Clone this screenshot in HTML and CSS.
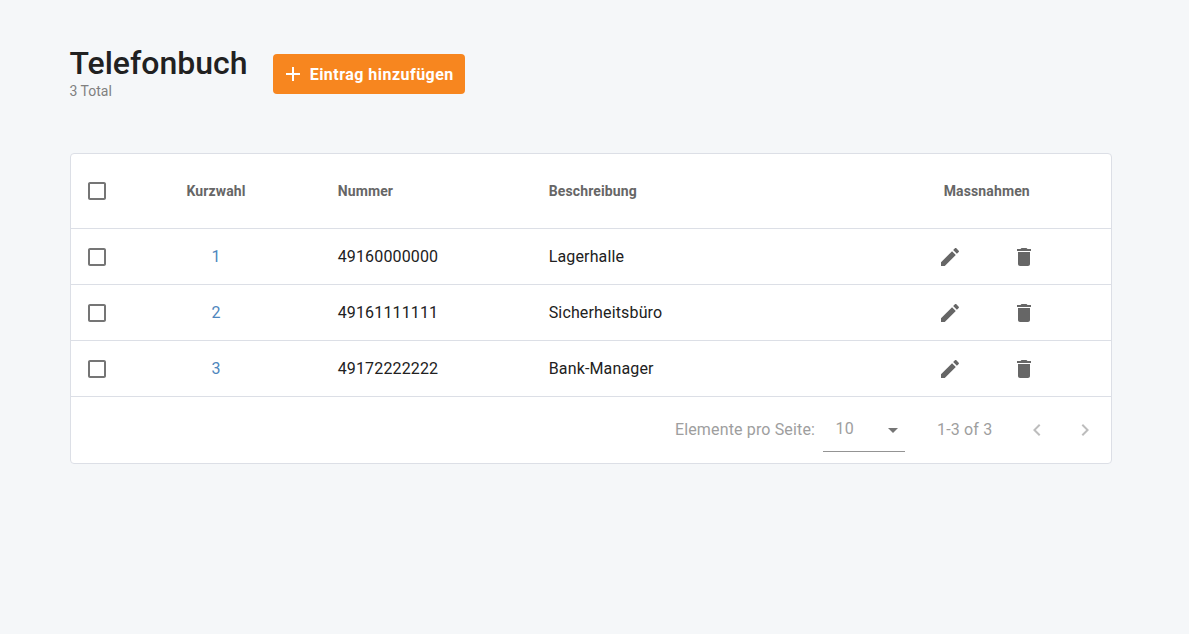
FILE: index.html
```html
<!DOCTYPE html>
<html lang="de">
<head>
<meta charset="utf-8">
<title>Telefonbuch</title>
<link rel="stylesheet" href="styles.css">
</head>
<body>
<svg width="0" height="0" class="defs">
  <symbol id="box" viewBox="0 0 24 24"><path d="M19 5v14H5V5h14m0-2H5c-1.1 0-2 .9-2 2v14c0 1.1.9 2 2 2h14c1.1 0 2-.9 2-2V5c0-1.1-.9-2-2-2z"/></symbol>
  <symbol id="edit" viewBox="0 0 24 24"><path d="M3 17.25V21h3.75L17.81 9.94l-3.75-3.75L3 17.25zM20.71 7.04c.39-.39.39-1.02 0-1.41l-2.34-2.34c-.39-.39-1.02-.39-1.41 0l-1.83 1.83 3.75 3.75 1.83-1.83z"/></symbol>
  <symbol id="delete" viewBox="0 0 24 24"><path d="M6 19c0 1.1.9 2 2 2h8c1.1 0 2-.9 2-2V7H6v12zM19 4h-3.5l-1-1h-5l-1 1H5v2h14V4z"/></symbol>
</svg>
<main class="page">
  <header class="header">
    <div class="heading">
      <h1 class="title">Telefonbuch</h1>
      <div class="total">3 Total</div>
    </div>
    <button class="add"><svg class="icon-add" viewBox="0 0 24 24"><path d="M19 13h-6v6h-2v-6H5v-2h6V5h2v6h6v2z"/></svg><span>Eintrag hinzufügen</span></button>
  </header>
  <section class="card">
    <div class="row head">
      <div class="check"><svg class="icon box"><use href="#box"/></svg></div>
      <div class="dial">Kurzwahl</div><div>Nummer</div><div>Beschreibung</div><div class="actions-title">Massnahmen</div>
    </div>
    <div class="row">
      <div class="check"><svg class="icon box"><use href="#box"/></svg></div>
      <div class="dial">1</div><div>49160000000</div><div>Lagerhalle</div>
      <div class="actions"><svg class="icon"><use href="#edit"/></svg><svg class="icon"><use href="#delete"/></svg></div>
    </div>
    <div class="row">
      <div class="check"><svg class="icon box"><use href="#box"/></svg></div>
      <div class="dial">2</div><div>49161111111</div><div>Sicherheitsbüro</div>
      <div class="actions"><svg class="icon"><use href="#edit"/></svg><svg class="icon"><use href="#delete"/></svg></div>
    </div>
    <div class="row">
      <div class="check"><svg class="icon box"><use href="#box"/></svg></div>
      <div class="dial">3</div><div>49172222222</div><div>Bank-Manager</div>
      <div class="actions"><svg class="icon"><use href="#edit"/></svg><svg class="icon"><use href="#delete"/></svg></div>
    </div>
    <footer class="pager">
      <span class="label">Elemente pro Seite:</span>
      <div class="select"><span>10</span><svg class="icon arrow" viewBox="0 0 24 24"><path d="M7 10l5 5 5-5z"/></svg></div>
      <span class="range">1-3 of 3</span>
      <svg class="icon nav" viewBox="0 0 24 24"><path d="M15.41 7.41L14 6l-6 6 6 6 1.41-1.41L10.83 12z"/></svg>
      <svg class="icon nav" viewBox="0 0 24 24"><path d="M10 6L8.59 7.41 13.17 12l-4.58 4.59L10 18l6-6z"/></svg>
    </footer>
  </section>
</main>
</body>
</html>
```
FILE: styles.css
```css
* { box-sizing: border-box; }
body { margin: 0; background: #f5f7f9; color: #212121; font-family: Roboto, sans-serif; font-size: 16px; letter-spacing: .15px; }
.defs { display: block; }
.page { padding: 43px 77px 0 69.5px; }
.header { display: flex; align-items: flex-start; height: 110px; }
.heading { width: 203.5px; }
.title { margin: 0; font-size: 32px; line-height: 40px; font-weight: 500; letter-spacing: 0; }
.total { font-size: 14px; line-height: 16px; color: #808080; letter-spacing: 0; }
.add { display: flex; align-items: center; gap: 4.7px; width: 192px; height: 40px; margin-top: 11px; padding: 0 8px; border: 0; border-radius: 4px; background: #f7861f; color: #fff; font: 700 16px Roboto, sans-serif; letter-spacing: .47px; white-space: nowrap; }
.icon-add { width: 24px; height: 24px; fill: currentColor; flex: none; }
.icon { display: block; width: 24px; height: 24px; fill: #666; flex: none; }
.box { fill: #757575; }
.card { margin-left: .5px; border: 1px solid #dcdfe6; border-radius: 4px; background: #fff; overflow: hidden; }
.row { display: grid; grid-template-columns: 90px 176.7px 211px 389.3px 1fr; align-items: center; height: 56px; border-bottom: 1px solid #dcdfe6; }
.head { height: 75px; font-size: 14px; font-weight: 700; color: #666; letter-spacing: .13px; }
.check { padding-left: 14px; }
.dial { width: 110px; text-align: center; color: #4e86bd; }
.head .dial { color: #666; }
.actions-title { padding-left: 5.7px; }
.actions { display: flex; gap: 50px; }
.pager { display: flex; align-items: center; height: 66px; padding-right: 14px; justify-content: flex-end; color: #9e9e9e; }
.label, .range { padding-bottom: 2px; }
.label { letter-spacing: .15px; }
.select { display: flex; align-items: center; justify-content: space-between; width: 82px; height: 46px; margin: 0 32px 2px 8px; padding-left: 12.5px; border-bottom: 1px solid #949494; }
.arrow { margin-top: 2px; fill: #757575; }
.range { margin-right: 32.7px; }
.nav { fill: #bdbdbd; }
.nav + .nav { margin-left: 24px; }
```
